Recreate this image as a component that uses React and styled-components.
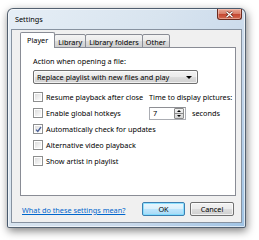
import React from 'react'
import styled, { createGlobalStyle } from 'styled-components'

const GlobalStyle = createGlobalStyle`
  html, body {
    margin: 0;
    padding: 0;
    background: #fff;
  }
  body {
    font-family: "Noto Sans", "Open Sans", sans-serif;
    font-size: 7.3px;
    color: #000;
  }
`

const Page = styled.div`
  width: 259px;
  height: 240px;
  padding: 8px 0 0 7px;
  box-sizing: border-box;
  overflow: hidden;
`

const Window = styled.div`
  width: 239px;
  height: 220px;
  box-sizing: border-box;
  display: flex;
  flex-direction: column;
  padding: 0 3px 4px 3px;
  border: 1px solid rgba(50, 64, 80, 0.8);
  border-radius: 6px 6px 2px 2px;
  background: linear-gradient(125deg, #e6eef6 0%, #d8e4ef 40%, #c9d9eb 70%, #9fc3e4 100%);
  box-shadow: 1px 3px 9px rgba(0, 0, 0, 0.5), inset 0 0 0 1px rgba(255, 255, 255, 0.6);
`

const TitleBar = styled.div`
  height: 20px;
  display: flex;
  justify-content: space-between;
  align-items: flex-start;
`

const Title = styled.span`
  margin: 5px 0 0 4px;
  line-height: 10px;
`

const CloseButton = styled.div`
  width: 25px;
  height: 11px;
  box-sizing: border-box;
  display: flex;
  align-items: center;
  justify-content: center;
  border: 1px solid #6a2a1f;
  border-top: none;
  border-radius: 0 0 3px 3px;
  background: linear-gradient(#eaa896 0%, #d9806b 45%, #c4442f 50%, #d36a50 100%);
  box-shadow: inset 0 0 0 1px rgba(255, 220, 210, 0.45);
`

const Client = styled.div`
  flex: 1;
  display: flex;
  flex-direction: column;
  padding: 3px 5px 0 8px;
  background: #f0f0f0;
  border: 1px solid rgba(78, 96, 116, 0.65);
`

const TabRow = styled.div`
  display: flex;
  align-items: flex-end;
  height: 15px;
  margin-bottom: -1px;
  position: relative;
  z-index: 1;
`

const Tab = styled.div`
  box-sizing: border-box;
  height: ${(p) => (p.$active ? 16 : 14)}px;
  padding: ${(p) => (p.$active ? '2px 6px 0' : '2px 3px 0')};
  margin-left: ${(p) => (p.$first ? 0 : -1)}px;
  border: 1px solid #898c95;
  border-bottom: ${(p) => (p.$active ? 'none' : '1px solid #898c95')};
  border-radius: 2px 2px 0 0;
  background: ${(p) =>
    p.$active ? '#fff' : 'linear-gradient(#f4f4f4 0%, #ebebeb 50%, #dddddd 51%, #cfcfcf 100%)'};
  line-height: 10px;
  position: relative;
  z-index: ${(p) => (p.$active ? 2 : 1)};
`

const Panel = styled.div`
  height: 149px;
  box-sizing: border-box;
  padding: 8px 0 0 12px;
  background: #fff;
  border: 1px solid #898c95;
`

const Label = styled.div`
  line-height: 10px;
`

const Select = styled.div`
  width: 165px;
  height: 14px;
  box-sizing: border-box;
  margin-top: 4px;
  padding: 0 5px 0 3px;
  display: flex;
  align-items: center;
  justify-content: space-between;
  border: 1px solid #707070;
  border-radius: 2px;
  background: linear-gradient(#f2f2f2 0%, #ebebeb 50%, #dddddd 51%, #cfcfcf 100%);
  box-shadow: inset 0 0 0 1px rgba(255, 255, 255, 0.7);
`

const Arrow = styled.span`
  width: 0;
  height: 0;
  border-left: 3px solid transparent;
  border-right: 3px solid transparent;
  border-top: 3px solid #000;
`

const Options = styled.div`
  margin-top: 5px;
  display: grid;
  grid-template-columns: 116px auto;
  grid-auto-rows: 16px;
  align-items: center;
`

const CheckRow = styled.label`
  display: flex;
  align-items: center;
  gap: 3px;
  white-space: nowrap;
  grid-column: ${(p) => (p.$wide ? '1 / span 2' : 'auto')};
`

const Box = styled.span`
  width: 8px;
  height: 8px;
  flex: none;
  display: flex;
  align-items: center;
  justify-content: center;
  border: 1px solid #8e8f8f;
  background: linear-gradient(135deg, #d8d8d8 0%, #f4f4f4 70%, #fff 100%);
  box-shadow: inset 0 0 0 1px #fff;
`

const SpinGroup = styled.div`
  display: flex;
  align-items: center;
  gap: 6px;
`

const SpinBox = styled.div`
  width: 37px;
  height: 13px;
  box-sizing: border-box;
  padding: 0 1px 0 3px;
  display: flex;
  align-items: center;
  justify-content: space-between;
  background: #fff;
  border: 1px solid #abadb3;
  border-top-color: #8e8f94;
`

const SpinButtons = styled.div`
  width: 8px;
  height: 9px;
  display: flex;
  flex-direction: column;
  border: 1px solid #8b8b8b;
  border-radius: 1px;
  background: linear-gradient(#f2f2f2, #d4d4d4);
`

const SpinHalf = styled.div`
  flex: 1;
  display: flex;
  align-items: center;
  justify-content: center;
  & + & {
    border-top: 1px solid #8b8b8b;
  }
`

const Footer = styled.div`
  flex: 1;
  display: flex;
  align-items: center;
  justify-content: space-between;
  padding: 0 2px 0 2px;
`

const Link = styled.a`
  color: #0066cc;
  text-decoration: underline;
  line-height: 10px;
  margin-top: 1px;
`

const Buttons = styled.div`
  display: flex;
  gap: 5px;
`

const Button = styled.div`
  width: ${(p) => p.$w}px;
  height: 14px;
  box-sizing: border-box;
  display: flex;
  align-items: center;
  justify-content: center;
  border: 1px solid ${(p) => (p.$default ? '#3c7fb1' : '#707070')};
  border-radius: 2px;
  background: ${(p) =>
    p.$default
      ? 'linear-gradient(#eaf6fd 0%, #d9f0fc 50%, #bee6fd 51%, #a7d9f5 100%)'
      : 'linear-gradient(#f2f2f2 0%, #ebebeb 50%, #dddddd 51%, #cfcfcf 100%)'};
  box-shadow: inset 0 0 0 1px ${(p) => (p.$default ? 'rgba(120, 220, 255, 0.8)' : 'rgba(255, 255, 255, 0.7)')};
`

const checks = [
  { label: 'Resume playback after close' },
  { label: 'Enable global hotkeys' },
  { label: 'Automatically check for updates', checked: true },
  { label: 'Alternative video playback' },
  { label: 'Show artist in playlist' },
]

function Check({ label, checked, wide }) {
  return (
    <CheckRow $wide={wide}>
      <Box>
        {checked && (
          <svg width="7" height="7" viewBox="0 0 7 7">
            <path d="M1 3.6 L2.8 5.5 L6 1" fill="none" stroke="#4a5f97" strokeWidth="1.3" />
          </svg>
        )}
      </Box>
      {label}
    </CheckRow>
  )
}

export default function App() {
  return (
    <Page>
      <GlobalStyle />
      <Window>
        <TitleBar>
          <Title>Settings</Title>
          <CloseButton>
            <svg width="9" height="7" viewBox="0 0 9 7">
              <path d="M1.5 0.8 L7.5 6.2 M7.5 0.8 L1.5 6.2" stroke="#5a1a10" strokeWidth="2.6" />
              <path d="M1.5 0.8 L7.5 6.2 M7.5 0.8 L1.5 6.2" stroke="#fff" strokeWidth="1.4" />
            </svg>
          </CloseButton>
        </TitleBar>
        <Client>
          <TabRow>
            <Tab $active $first>Player</Tab>
            <Tab>Library</Tab>
            <Tab>Library folders</Tab>
            <Tab>Other</Tab>
          </TabRow>
          <Panel>
            <Label>Action when opening a file:</Label>
            <Select>
              <span>Replace playlist with new files and play</span>
              <Arrow />
            </Select>
            <Options>
              <Check {...checks[0]} />
              <Label>Time to display pictures:</Label>
              <Check {...checks[1]} />
              <SpinGroup>
                <SpinBox>
                  <span>7</span>
                  <SpinButtons>
                    <SpinHalf>
                      <svg width="4" height="2" viewBox="0 0 4 2"><path d="M0 2 L2 0 L4 2Z" fill="#000" /></svg>
                    </SpinHalf>
                    <SpinHalf>
                      <svg width="4" height="2" viewBox="0 0 4 2"><path d="M0 0 L2 2 L4 0Z" fill="#000" /></svg>
                    </SpinHalf>
                  </SpinButtons>
                </SpinBox>
                <span>seconds</span>
              </SpinGroup>
              <Check {...checks[2]} wide />
              <Check {...checks[3]} wide />
              <Check {...checks[4]} wide />
            </Options>
          </Panel>
          <Footer>
            <Link href="#">What do these settings mean?</Link>
            <Buttons>
              <Button $w={43} $default>OK</Button>
              <Button $w={44}>Cancel</Button>
            </Buttons>
          </Footer>
        </Client>
      </Window>
    </Page>
  )
}
